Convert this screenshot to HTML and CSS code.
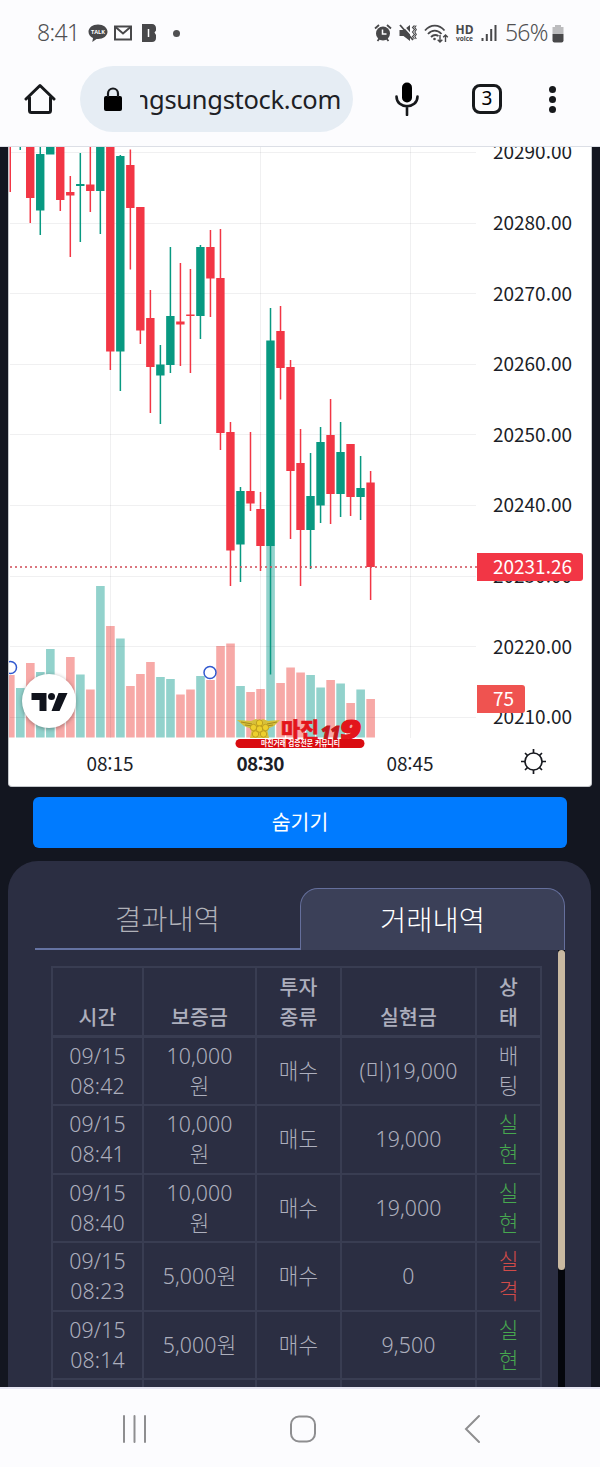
FILE: index.html
```html
<!DOCTYPE html>
<html lang="ko">
<head>
    <meta charset="UTF-8">
    <meta name="viewport" content="width=device-width, initial-scale=1.0">
    <title>거래내역</title>
    <link rel="stylesheet" href="styles.css">
</head>
<body>
    <header class="top">
        <div class="status">
            <div class="status-left">
                <span class="clock">8:41</span>
                <svg class="talk" width="20" height="19" viewBox="0 0 20 19">
                    <path d="M10 0.5C4.6 0.5 0.5 3.7 0.5 7.8c0 2.8 1.9 5.1 4.5 6.3L4.3 18l4.2-3h1.5c5.3 0 9.5-3.1 9.5-7.2S15.3 0.5 10 0.5z"/>
                    <text x="3" y="10" textLength="14" lengthAdjust="spacingAndGlyphs">TALK</text>
                </svg>
                <svg class="mail" width="18" height="16" viewBox="0 0 18 16"><rect x="1" y="1.5" width="16" height="13"/><path d="M1.5 2l7.5 6.5L16.5 2"/></svg>
                <svg class="band" width="14" height="18" viewBox="0 0 14 18"><path d="M0 0h10c2.5 0 4 2 4 4v2.500l-1.500 2L14 11v3c0 2.500-1.500 4-4 4H0z"/><path class="slot" d="M6.500 5v8"/></svg>
                <span class="more-dot"></span>
            </div>
            <div class="status-right">
                <svg class="alarm" width="18" height="18" viewBox="0 0 18 18">
                    <circle cx="9" cy="9.500" r="7"/>
                    <path class="ear" d="M1 4.500L5 1M17 4.500L13 1M3.500 17l2-2.500M14.500 17l-2-2.500"/>
                    <path class="hand" d="M8.500 5.500v4.500h4"/>
                </svg>
                <svg class="mute" width="18" height="18" viewBox="0 0 18 18">
                    <path d="M0.500 6h4L11 1v16l-6.500-5h-4z"/>
                    <path class="cut" d="M2.500 0l11 12"/>
                    <path class="slash" d="M1 1l13 15"/>
                    <path class="buzz" d="M15.500 1.500l-2 2 2 2-2 2.500 2 2.500-2 2 2 2.500M17.300 1.500l-1.500 2 1.500 2-1.500 2.500 1.500 2.500-1.500 2 1.500 2.500"/>
                </svg>
                <svg class="wifi" width="25" height="19" viewBox="0 0 25 19">
                    <path d="M1 6.500C6.500 0 15 0 20.500 6.500M4 10c4-4.500 9.500-4.500 13.500 0M7 13c2.500-2.500 5-2.500 7.500-1"/>
                    <circle cx="10.500" cy="15" r="1.300"/>
                    <path class="arrows" d="M16 11v7M13.700 15.700L16 18l2.300-2.300M21.500 18v-7M19.200 13.300L21.500 11l2.300 2.300"/>
                </svg>
                <svg class="hd" width="19" height="18" viewBox="0 0 19 18">
                    <text class="hd-big" x="0.500" y="9.500" textLength="18" lengthAdjust="spacingAndGlyphs">HD</text>
                    <text class="hd-small" x="1" y="16.500" textLength="17" lengthAdjust="spacingAndGlyphs">voice</text>
                </svg>
                <svg class="signal" width="17" height="18" viewBox="0 0 17 18"><path d="M1.500 14v3M5.800 10v7M10.200 5v12M14.500 1v16"/></svg>
                <span class="percent">56%</span>
                <svg class="battery" width="12" height="19" viewBox="0 0 12 19"><path class="empty" d="M3 1h6v2h2.500v7H.5V3H3z"/><path d="M.5 10h11v6.500a2 2 0 0 1-2 2h-7a2 2 0 0 1-2-2z"/></svg>
            </div>
        </div>
        <div class="browser">
            <svg class="home" width="32" height="32" viewBox="0 0 32 32"><path d="M5.500 14.500V27.500a2 2 0 0 0 2 2h17a2 2 0 0 0 2-2V14.500M2 16L16 2.500 30 16"/></svg>
            <div class="address">
                <svg width="20" height="25" viewBox="0 0 20 25"><rect x="1" y="9" width="18" height="15" rx="2"/><path d="M5 10V6.500a5 5 0 0 1 10 0V10"/></svg>
                <div class="url"><span>ngsungstock.com</span></div>
            </div>
            <svg class="mic" width="24" height="34" viewBox="0 0 24 34"><rect x="7" y="0.500" width="10" height="20" rx="5"/><path d="M1.500 14.500c0 13 21 13 21 0M12 24v9"/></svg>
            <div class="tab-count">3</div>
            <div class="dots"><i></i><i></i><i></i></div>
        </div>
    </header>

    <main class="page">
        <section class="chart">
            <svg id="chart" width="582" height="638" viewBox="9 147 582 638">
                <g id="volume"></g>
                <g id="grid"></g>
                <g id="candles"></g>
                <path class="last-line" d="M10 567H477"/>
                <g class="marker">
                    <circle cx="10.500" cy="667.500" r="6"/>
                    <circle cx="210" cy="672.500" r="6"/>
                </g>
                <g id="prices"></g>
                <path class="last-tag" d="M477 553h103a3 3 0 0 1 3 3v22a3 3 0 0 1-3 3H477z"/>
                <text class="tag-text" x="493" y="574" textLength="79">20231.26</text>
                <path class="volume-tag" d="M477 685h45a3 3 0 0 1 3 3v22a3 3 0 0 1-3 3H477z"/>
                <text class="tag-text" x="493" y="706" textLength="21">75</text>
                <text x="86.500" y="770.500" textLength="47">08:15</text>
                <text class="bold" x="236.500" y="770.500" textLength="48">08:30</text>
                <text x="386.500" y="770.500" textLength="47">08:45</text>
                <g class="gear">
                    <circle cx="533.500" cy="761.500" r="8.500"/>
                    <path d="M533.500 753v-4M533.500 770v4M525 761.500h-4M542 761.500h4M527.500 755.500l-2.500-2.500M539.500 755.500l2.500-2.500M527.500 767.500l-2.500 2.500M539.500 767.500l2.500 2.500"/>
                </g>
                <g class="tv">
                    <circle cx="49" cy="701" r="27"/>
                    <path d="M31.500 693H46.500V711H39.500V700H31.500zM58.500 693H67.500L59.500 711H51.500z"/>
                    <circle class="tv-dot" cx="51.500" cy="696.500" r="3.500"/>
                </g>
                <g class="sponsor">
                    <path class="wing" d="M237 720l14 1 5-2 3.500 1.500 3.500-1.500 5 2 12-1-6 6-7 3 2 9h-19l2-9-8-3z"/>
                    <path class="wing-lines" d="M241 722l11 2M245 725l8 1M277 722l-10 2M273 725l-7 1"/>
                    <g class="petals">
                        <circle cx="259.500" cy="723" r="3.200"/><circle cx="253.500" cy="727.500" r="3.200"/><circle cx="265.500" cy="727.500" r="3.200"/>
                        <circle cx="255.500" cy="734" r="3.200"/><circle cx="263.500" cy="734" r="3.200"/><circle cx="259.500" cy="729" r="3.200"/>
                    </g>
                    <text class="name" x="281" y="736.500" textLength="38" lengthAdjust="spacingAndGlyphs">마진</text>
                    <text class="one" x="321" y="739" textLength="19" lengthAdjust="spacingAndGlyphs">11</text>
                    <text class="nine" x="340" y="738.500" textLength="21" lengthAdjust="spacingAndGlyphs">9</text>
                    <rect x="235.500" y="739" width="129" height="9" rx="4.500"/>
                    <text class="tagline" x="261" y="746.300" textLength="79" lengthAdjust="spacingAndGlyphs">마진거래 검증전문 커뮤니티</text>
                </g>
            </svg>
        </section>

        <button class="hide-button">숨기기</button>

        <section class="history">
            <div class="tabs">
                <div class="tab">결과내역</div>
                <div class="tab active">거래내역</div>
            </div>
            <div class="list">
                <table>
                    <colgroup><col class="c-time"><col class="c-deposit"><col class="c-kind"><col class="c-profit"><col class="c-state"></colgroup>
                    <thead>
                        <tr><th>시간</th><th>보증금</th><th>투자<br>종류</th><th>실현금</th><th>상<br>태</th></tr>
                    </thead>
                    <tbody>
                        <tr><td>09/15<br>08:42</td><td>10,000<br>원</td><td>매수</td><td>(미)19,000</td><td>배<br>팅</td></tr>
                        <tr><td>09/15<br>08:41</td><td>10,000<br>원</td><td>매도</td><td>19,000</td><td class="win">실<br>현</td></tr>
                        <tr><td>09/15<br>08:40</td><td>10,000<br>원</td><td>매수</td><td>19,000</td><td class="win">실<br>현</td></tr>
                        <tr><td>09/15<br>08:23</td><td>5,000원</td><td>매수</td><td>0</td><td class="lose">실<br>격</td></tr>
                        <tr><td>09/15<br>08:14</td><td>5,000원</td><td>매수</td><td>9,500</td><td class="win">실<br>현</td></tr>
                        <tr><td></td><td></td><td></td><td></td><td></td></tr>
                    </tbody>
                </table>
                <div class="track"><div class="thumb"></div></div>
            </div>
        </section>
    </main>

    <nav class="navbar">
        <svg width="26" height="30" viewBox="0 0 26 30"><path d="M2 2v26M12.500 2v26M23 2v26"/></svg>
        <svg class="nav-home" width="28" height="30" viewBox="0 0 28 30"><rect x="2" y="2.500" width="24" height="25" rx="8"/></svg>
        <svg width="18" height="32" viewBox="0 0 18 32"><path d="M16 3L3 16l13 13"/></svg>
    </nav>

    <script src="chart.js"></script>
</body>
</html>
```
FILE: styles.css
```css
* {
    box-sizing: border-box;
}
body {
    margin: 0;
    width: 600px;
    height: 1467px;
    display: flex;
    flex-direction: column;
    overflow: hidden;
    background: #131620;
    font-family: "Noto Sans", "Noto Sans CJK KR", sans-serif;
}
svg {
    display: block;
    flex: none;
}

/* status bar + address bar */
.top {
    height: 147px;
    flex: none;
    background: #fcfcfe;
    border-bottom: 1px solid #dcdfe6;
}
.status {
    height: 66px;
    padding: 0 36px 0 37px;
    display: flex;
    justify-content: space-between;
    align-items: center;
    color: #505052;
}
.status-left,
.status-right {
    display: flex;
    align-items: center;
}
.status svg {
    fill: #48484a;
}
.clock {
    width: 51px;
    font-size: 23px;
    font-weight: 300;
    letter-spacing: -0.6px;
    line-height: 30px;
    padding-bottom: 2px;
}
.talk text {
    fill: #fff;
    font: bold 6px "Open Sans", sans-serif;
}
.mail {
    margin-left: 6px;
}
.status .mail {
    fill: none;
    stroke: #48484a;
    stroke-width: 2;
}
.band {
    margin-left: 10px;
}
.slot {
    stroke: #fff;
    stroke-width: 1.5;
}
.more-dot {
    width: 7px;
    height: 7px;
    margin-left: 17px;
    border-radius: 50%;
    background: #505052;
}
.status-right {
    gap: 6.8px;
}
.ear,
.slash,
.buzz {
    fill: none;
    stroke: #48484a;
    stroke-width: 1.8;
}
.buzz {
    stroke-width: 1.1;
}
.hand,
.cut {
    fill: none;
    stroke: #fcfcfe;
    stroke-width: 1.5;
}
.wifi path {
    fill: none;
    stroke: #48484a;
    stroke-width: 1.8;
}
.wifi .arrows {
    stroke-width: 1.4;
}
.hd {
    font-family: "Open Sans", sans-serif;
    font-weight: 700;
}
.hd-big {
    font-size: 12px;
}
.hd-small {
    font-size: 7.5px;
}
.signal path {
    stroke: #48484a;
    stroke-width: 2;
}
.percent {
    width: 40.2px;
    padding-bottom: 2px;
    font-size: 23px;
    font-weight: 300;
    letter-spacing: -0.8px;
    line-height: 30px;
    white-space: nowrap;
}
.battery .empty {
    fill: #bcbcbe;
}

.browser {
    height: 66px;
    padding-left: 24px;
    display: flex;
    align-items: center;
}
.home path {
    fill: none;
    stroke: #17191c;
    stroke-width: 3;
    stroke-linejoin: round;
    stroke-linecap: round;
}
.address {
    width: 273px;
    height: 66px;
    margin-left: 24px;
    padding-left: 23px;
    display: flex;
    align-items: center;
    border-radius: 33px;
    background: #e6edf4;
}
.address path {
    fill: none;
    stroke: #17191c;
    stroke-width: 2.2;
}
.url {
    width: 201px;
    margin-left: 17px;
    overflow: hidden;
    display: flex;
    justify-content: flex-end;
    font-size: 25.500px;
    letter-spacing: -0.3px;
    color: #1d2024;
    white-space: nowrap;
}
.mic {
    margin-left: 39px;
}
.address,
.mic {
    flex: none;
}
.mic {
    margin-left: 42px;
}
.mic path {
    fill: none;
    stroke: #17191c;
    stroke-width: 2.6;
    stroke-linecap: round;
}
.tab-count {
    width: 30px;
    height: 30px;
    margin-left: 53px;
    border: 3px solid #17191c;
    border-radius: 8px;
    font-size: 19px;
    line-height: 23px;
    text-align: center;
}
.dots {
    margin-left: 47px;
    display: grid;
    gap: 3px;
}
.dots i {
    width: 7px;
    height: 7px;
    border-radius: 50%;
    background: #17191c;
}

/* page */
.page {
    height: 1240px;
    flex: none;
    overflow: hidden;
}
.chart {
    width: 584px;
    height: 640px;
    margin-left: 8px;
    border: 1px solid #c4c7cb;
    border-top: 0;
    border-radius: 0 0 4px 4px;
    background: #fff;
    overflow: hidden;
}
.chart text {
    font-family: "Noto Sans CJK KR", sans-serif;
    font-size: 19px;
    fill: #1b1e27;
}
.chart .bold {
    font-weight: 700;
}
.chart .tag-text {
    fill: #fff;
}
#grid path {
    stroke: #2a2e39;
    stroke-opacity: 0.07;
}
.up {
    fill: #089981;
}
.down {
    fill: #f23645;
}
.vol-up {
    fill: #92d2cc;
}
.vol-down {
    fill: #f7a9a7;
}
.last-line {
    stroke: #cf4a55;
    stroke-width: 1.6;
    stroke-dasharray: 2 3;
}
.marker circle {
    fill: #fff;
    stroke: #3159cf;
    stroke-width: 1.5;
}
.last-tag {
    fill: #f23645;
}
.volume-tag {
    fill: #ef5350;
}
.gear {
    fill: none;
    stroke: #17191f;
    stroke-width: 1.7;
}
.tv {
    fill: #10131c;
}
.tv circle:first-child {
    fill: #fff;
    filter: drop-shadow(0 1px 2px rgba(0, 0, 0, 0.35));
}
.sponsor rect {
    fill: #d90b10;
}
.sponsor .wing {
    fill: #d6c03c;
}
.sponsor .wing-lines {
    stroke: #a58b1d;
}
.petals {
    fill: #edcf2d;
    stroke: #b5941c;
    stroke-width: 0.8;
}
.chart .sponsor .name {
    font-size: 21px;
    font-weight: 900;
    fill: #e3151b;
    stroke: #e3151b;
    stroke-width: 0.6;
}
.chart .sponsor .one,
.chart .sponsor .nine {
    font-family: "Open Sans", sans-serif;
    font-size: 17px;
    font-weight: 800;
    font-style: italic;
    fill: #c4171c;
    stroke: #c4171c;
    stroke-width: 1.2;
}
.chart .sponsor .nine {
    font-size: 27px;
    fill: #e3151b;
    stroke: #e3151b;
}
.chart .sponsor .tagline {
    font-size: 8px;
    font-weight: 700;
    fill: #fff;
}

.hide-button {
    display: block;
    width: 534px;
    height: 51px;
    margin: 10px 0 0 33px;
    padding: 0 0 3px;
    border: 0;
    border-radius: 6px;
    background: #007bff;
    color: #fff;
    font: 400 20.5px "Noto Sans CJK KR", sans-serif;
}

.history {
    width: 583px;
    height: 560px;
    margin: 13px 0 0 8px;
    padding: 27px 26px 0 27px;
    border-radius: 30px 30px 0 0;
    background: #2b2e42;
}
.tabs {
    display: flex;
    height: 62px;
}
.tab {
    width: 265px;
    border-bottom: 2px solid #6573a2;
    font-family: "Noto Sans CJK KR", sans-serif;
    font-size: 28.5px;
    font-weight: 300;
    line-height: 60px;
    text-align: center;
    color: #b0b1b8;
}
.tab.active {
    border: 1.5px solid #656f9c;
    border-bottom: 0;
    border-radius: 18px 18px 0 0;
    background: #3b4058;
    color: #fff;
}
.list {
    display: flex;
    justify-content: space-between;
    height: 440px;
    padding-left: 16px;
}
table {
    width: 490px;
    height: max-content;
    margin-top: 16px;
    table-layout: fixed;
    border-collapse: collapse;
    font-size: 21.3px;
    font-weight: 300;
    letter-spacing: 0.1px;
    line-height: 30px;
    color: #adafbd;
    text-align: center;
}
.c-time { width: 91px; }
.c-deposit { width: 113px; }
.c-kind { width: 85px; }
.c-profit { width: 135px; }
.c-state { width: 65px; }
th,
td {
    height: 68.5px;
    padding: 0 10px;
    border: 2px solid #393d52;
}
th {
    height: 69.5px;
    padding: 0 0 3px;
    vertical-align: bottom;
    border-bottom-width: 3px;
    font-size: 20.5px;
    font-weight: 500;
}
th:last-child {
    padding: 0 10px 3px;
}
td:nth-child(4) {
    padding: 0;
}
.win {
    color: #47a84f;
}
.lose {
    color: #d14b49;
}
.track {
    width: 7px;
    background: #05070d;
}
.thumb {
    height: 320px;
    border-radius: 4px;
    background: #c9b9a1;
}

.navbar {
    height: 80px;
    flex: none;
    padding: 2px 119px 0 122px;
    display: flex;
    align-items: center;
    border-top: 2px solid #e7e7f3;
    background: #fcfcfe;
}
.navbar svg {
    fill: none;
    stroke: #8e8e90;
    stroke-width: 2;
    stroke-linecap: round;
}
.nav-home {
    margin: 0 146px 0 141px;
}
```
FILE: chart.js
```js
const NS = 'http://www.w3.org/2000/svg';

// one entry per minute: direction, high, body top, body bottom, low, volume top
const bars = [
    ['d', 140, 140, 147, 192, 675],
    ['u', 140, 140, 146, 150, 688],
    ['d', 147, 147, 198, 223, 663],
    ['u', 147, 154, 210.5, 235, 672],
    ['u', 147, 147, 154.5, 154, 649],
    ['d', 147, 147, 200, 211, 700],
    ['d', 176, 192, 195.5, 257, 657],
    ['u', 153, 184, 186, 242, 674.5],
    ['d', 147, 184.5, 191, 212, 689.5],
    ['u', 147, 147, 191, 234, 586],
    ['d', 147, 147, 351.5, 370, 626],
    ['u', 155, 156, 351.5, 391, 638.5],
    ['d', 149.5, 165, 208, 269.5, 686],
    ['d', 207, 207, 330.5, 344, 674],
    ['d', 290, 318, 367, 413, 662],
    ['u', 345, 364.5, 375.5, 424, 677],
    ['u', 247, 316, 365, 373, 679],
    ['d', 263, 321.5, 324.5, 366, 694.5],
    ['d', 269, 314.5, 316, 373, 689.5],
    ['u', 245, 247, 316, 339, 676],
    ['d', 230, 247, 278.5, 317, 680],
    ['d', 229, 278, 433, 450, 646],
    ['d', 422, 432, 550.5, 586, 643.5],
    ['u', 487, 491, 544.5, 582, 686],
    ['d', 432, 491, 503.5, 511, 692],
    ['d', 492, 509, 546, 571, 689],
    ['u', 308, 340.5, 546, 674.5, 500],
    ['d', 306, 331, 368, 399.5, 683],
    ['d', 360, 367, 471, 539, 667.5],
    ['d', 429, 463, 530, 586, 672.5],
    ['u', 453, 496, 530, 569, 675],
    ['u', 427, 442, 505.5, 523, 687.5],
    ['d', 399, 435, 494, 524, 680],
    ['u', 422, 452, 494, 517, 683.5],
    ['d', 444, 444, 497, 516, 703],
    ['u', 456, 488, 497, 520, 689.5],
    ['d', 471, 482.5, 567, 600, 699]
];

function add(parent, tag, attrs) {
    const el = document.createElementNS(NS, tag);
    for (const key in attrs) {
        el.setAttribute(key, attrs[key]);
    }
    document.getElementById(parent).appendChild(el);
    return el;
}

bars.forEach(([dir, high, top, bottom, low, vol], i) => {
    const x = 10 + i * 10.01;
    const cls = dir === 'u' ? 'up' : 'down';
    add('volume', 'rect', { class: 'vol-' + cls, x: x - 4, y: vol, width: 8.6, height: 737.5 - vol });
    add('candles', 'rect', { class: cls, x: x - 0.5, y: high, width: 1.5, height: low - high });
    add('candles', 'rect', { class: cls, x: x - 4, y: top, width: 8.4, height: bottom - top });
});

for (let i = 0; i < 9; i++) {
    const y = 152.5 + i * 70.6;
    add('grid', 'path', { d: `M10 ${Math.floor(y) + 0.5}H476` });
    const label = add('prices', 'text', { x: 493, y: y + 6.8, textLength: 79 });
    label.textContent = (20290 - i * 10).toFixed(2);
}

[110.5, 260.5, 410.5].forEach(x => add('grid', 'path', { d: `M${x} 147V738` }));
```
